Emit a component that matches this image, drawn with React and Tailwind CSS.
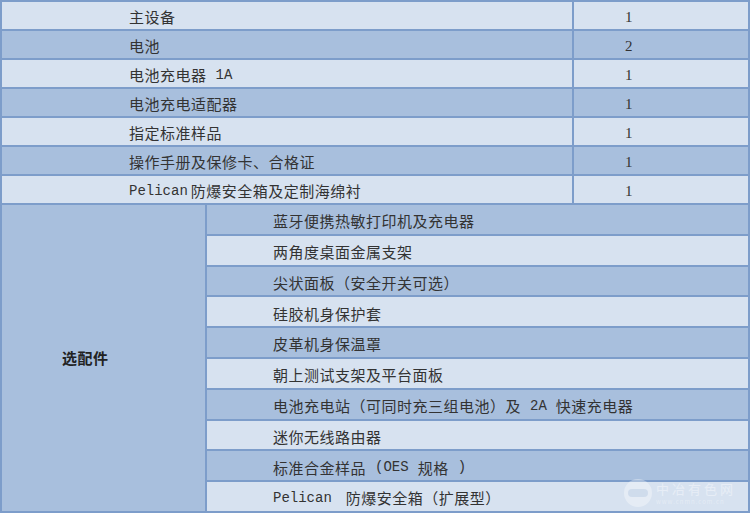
import React from "react";

const LIGHT = "bg-[#d7e2f0]";
const DARK = "bg-[#a8bfdd]";

const Latin = ({ children, gap = "" }) => (
  <span className={`text-[14px] tracking-[0px] ${gap}`} style={{ fontFamily: '"Liberation Mono", monospace' }}>{children}</span>
);

const mainRows = [
  { name: "主设备", qty: "1" },
  { name: "电池", qty: "2" },
  { name: <>电池充电器<Latin gap="ml-[9px]">1A</Latin></>, qty: "1" },
  { name: "电池充电适配器", qty: "1" },
  { name: "指定标准样品", qty: "1" },
  { name: "操作手册及保修卡、合格证", qty: "1" },
  { name: <><Latin gap="mr-[3px]">Pelican</Latin>防爆安全箱及定制海绵衬</>, qty: "1" },
];

const extras = [
  "蓝牙便携热敏打印机及充电器",
  "两角度桌面金属支架",
  "尖状面板（安全开关可选）",
  "硅胶机身保护套",
  "皮革机身保温罩",
  "朝上测试支架及平台面板",
  <>电池充电站（可同时充三组电池）及<Latin gap="mx-[9px]">2A</Latin>快速充电器</>,
  "迷你无线路由器",
  <>标准合金样品<Latin gap="ml-[9px]">(OES</Latin><span className="ml-[9px]">规格</span><Latin gap="ml-[9px]">)</Latin></>,
  <><Latin gap="mr-[14px]">Pelican</Latin>防爆安全箱（扩展型）</>,
];

export default function App() {
  return (
    <div
      className="relative w-[750px] h-[513px] bg-[#7d9dca] p-[2px] flex flex-col gap-[2px] text-[#333] text-[15px] tracking-[0.5px]"
      style={{ fontFamily: '"Noto Sans CJK SC", sans-serif' }}
    >
      {mainRows.map((row, i) => {
        const bg = i % 2 === 0 ? LIGHT : DARK;
        return (
          <div key={i} className="flex h-[27px] gap-[2px] shrink-0">
            <div className={`${bg} w-[570px] flex items-center pl-[127px] pt-[4px]`}>{row.name}</div>
            <div className={`${bg} flex-1 flex items-center pl-[51px] pt-[4px]`}>
              <span style={{ fontFamily: '"Liberation Serif", serif' }} className="text-[15px]">{row.qty}</span>
            </div>
          </div>
        );
      })}

      <div className="flex flex-1 gap-[2px]">
        <div className={`${DARK} w-[203px] flex items-center pl-[60px] font-bold text-[#222]`}>
          选配件
        </div>
        <div className="flex-1 flex flex-col gap-[2px]">
          {extras.map((item, i) => (
            <div key={i} className={`${i % 2 === 0 ? DARK : LIGHT} flex-1 flex items-center pl-[66px] pt-[4px]`}>
              {item}
            </div>
          ))}
        </div>
      </div>

      {/* faint watermark */}
      <div className="absolute right-[14px] bottom-[6px] flex items-center gap-[4px] opacity-50 pointer-events-none">
        <div className="w-[28px] h-[28px] rounded-full bg-white/70 flex items-center justify-center">
          <div className="w-[20px] h-[8px] rounded-full bg-[#c9d7ea]" />
        </div>
        <div className="flex flex-col gap-[3px]">
          <span className="text-white/80 text-[13px] leading-[14px] tracking-[3px]">中冶有色网</span>
          <span className="text-white/70 text-[6px] leading-[6px] tracking-[1px]">www.cnmn.com.cn</span>
        </div>
      </div>
    </div>
  );
}
